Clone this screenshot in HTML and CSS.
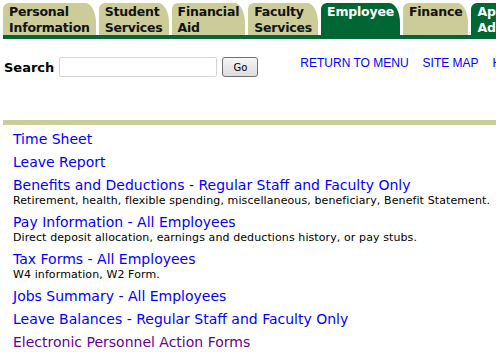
FILE: index.html
```html
<!DOCTYPE html>
<html lang="en">
<head>
    <meta charset="UTF-8">
    <title>Employee</title>
    <link rel="stylesheet" href="styles.css">
</head>
<body>
    <div class="tabs">
        <a class="tab" href="#">Personal<br>Information</a>
        <a class="tab" href="#">Student<br>Services</a>
        <a class="tab" href="#">Financial<br>Aid</a>
        <a class="tab" href="#">Faculty<br>Services</a>
        <a class="tab active" href="#">Employee</a>
        <a class="tab" href="#">Finance</a>
        <a class="tab active" href="#">Applicant<br>Admin</a>
    </div>

    <div class="searchbar">
        <form class="search">
            <label for="q">Search</label>
            <input type="text" id="q">
            <button type="button">Go</button>
        </form>
        <div class="toplinks">
            <a href="#">RETURN TO MENU</a>
            <a href="#">SITE MAP</a>
            <a href="#">HELP</a>
        </div>
    </div>

    <div class="divider"></div>

    <ul class="menu">
        <li><a href="#">Time Sheet</a></li>
        <li><a href="#">Leave Report</a></li>
        <li>
            <a href="#">Benefits and Deductions - Regular Staff and Faculty Only</a>
            <div class="desc">Retirement, health, flexible spending, miscellaneous, beneficiary, Benefit Statement.</div>
        </li>
        <li>
            <a href="#">Pay Information - All Employees</a>
            <div class="desc">Direct deposit allocation, earnings and deductions history, or pay stubs.</div>
        </li>
        <li>
            <a href="#">Tax Forms - All Employees</a>
            <div class="desc">W4 information, W2 Form.</div>
        </li>
        <li><a href="#">Jobs Summary - All Employees</a></li>
        <li><a href="#">Leave Balances - Regular Staff and Faculty Only</a></li>
        <li><a class="visited" href="#">Electronic Personnel Action Forms</a></li>
    </ul>
</body>
</html>
```

FILE: styles.css
```css
body {
    margin: 0;
    font-family: "DejaVu Sans", Verdana, sans-serif;
    background: #fff;
    color: #000;
    overflow: hidden;
}
.tabs {
    display: flex;
    gap: 3px;
    margin: 0 0 0 3px;
    padding-top: 3px;
    border-bottom: 4px solid #006633;
    white-space: nowrap;
}
.tab {
    flex-shrink: 0;
    height: 31px;
    padding: 1px 6px 0 6px;
    background: #cccc99;
    color: #111;
    font-size: 12.5px;
    font-weight: bold;
    letter-spacing: -0.2px;
    line-height: 16px;
    text-decoration: none;
    border-radius: 6px 11px 0 0 / 6px 20px 0 0;
}
.tab.active {
    background: #006633;
    color: #fff;
}
.searchbar {
    display: flex;
    align-items: flex-start;
    margin-top: 18px;
    height: 63px;
}
.search {
    display: flex;
    align-items: center;
    margin: 0 0 0 4px;
}
.search label {
    font-size: 13px;
    font-weight: bold;
    margin-top: 1px;
}
.search input {
    width: 154px;
    height: 16px;
    margin-left: 5px;
    padding: 1px;
    border: 1px solid #d4d4d4;
    border-radius: 2px;
}
.search button {
    width: 36px;
    height: 20px;
    margin-left: 5px;
    padding: 0;
    font-family: "DejaVu Sans", Verdana, sans-serif;
    font-size: 10px;
    color: #000;
    background: linear-gradient(#f6f6f6, #dcdcdc);
    border: 1px solid #707070;
    border-radius: 3px;
}
.toplinks {
    display: flex;
    gap: 14px;
    margin-left: 42px;
    white-space: nowrap;
}
.toplinks a {
    font-family: "Liberation Sans", Arial, sans-serif;
    font-size: 12px;
    line-height: 12px;
    color: #0000ff;
    text-decoration: none;
}
.divider {
    height: 5px;
    margin-left: 3px;
    background: #cccc99;
}
.menu {
    list-style: none;
    margin: 0;
    padding: 0 0 0 13px;
}
.menu li {
    margin-top: 5px;
}
.menu a {
    display: block;
    font-size: 14px;
    line-height: 18px;
    color: #0000ff;
    text-decoration: none;
    white-space: nowrap;
}
.menu a.visited {
    color: #660099;
}
.desc {
    font-size: 11px;
    letter-spacing: 0.1px;
    line-height: 14px;
    white-space: nowrap;
}
```
